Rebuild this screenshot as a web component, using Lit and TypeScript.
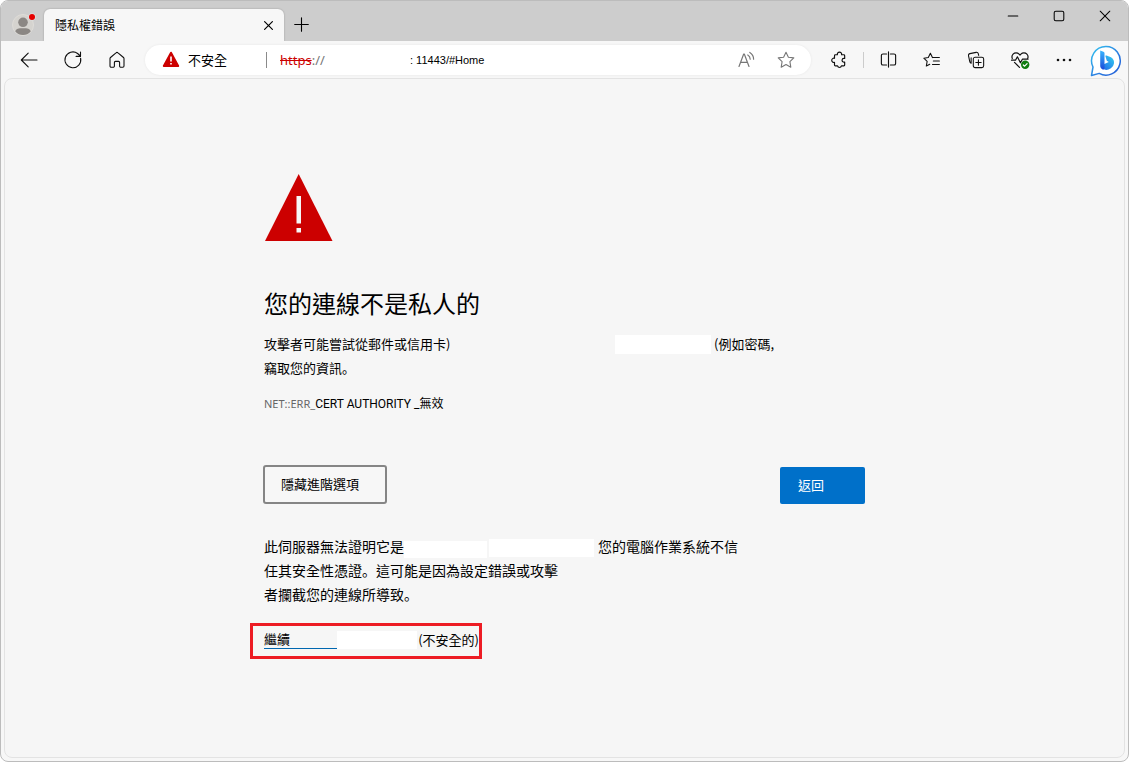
import { LitElement, html, css, svg } from "lit";
import { customElement, state } from "lit/decorators.js";

const icon = (size: number, body: unknown, width = 1.1) => html`
  <svg width=${size} height=${size} viewBox="0 0 20 20" fill="none" stroke="currentColor"
    stroke-width=${width} stroke-linecap="round" stroke-linejoin="round" aria-hidden="true">${body}</svg>`;

const STAR = "M10 2.2 12.4 7.2 17.8 7.9 13.9 11.7 14.8 17.2 10 14.6 5.2 17.2 6.1 11.7 2.2 7.9 7.6 7.2Z";

const icons = {
  back: svg`<path d="M18 10H2.3M9.2 3.2 2.3 10l6.9 6.8"/>`,
  reload: svg`<path d="M17.6 8.2A7.9 7.9 0 1 1 14.6 3.5L17.3 6M17.5 2v4.4h-4.4"/>`,
  home: svg`<path d="M3 8.6a1.5 1.5 0 0 1 .5-1.1L9 2.8a1.5 1.5 0 0 1 2 0l5.5 4.7a1.5 1.5 0 0 1 .5 1.1V16a1.2 1.2 0 0 1-1.2 1.2h-2A1.2 1.2 0 0 1 12.6 16v-3.6a1 1 0 0 0-1-1H8.4a1 1 0 0 0-1 1V16a1.2 1.2 0 0 1-1.2 1.2h-2A1.2 1.2 0 0 1 3 16Z"/>`,
  readAloud: svg`<path d="M3 16.500 7.700 4h.6L13 16.500M4.700 12.300h6.600M11.800 5a5 5 0 0 1 2.400 4.200M13.800 2.400a8 8 0 0 1 3.800 6.800"/>`,
  star: svg`<path d=${STAR}/>`,
  puzzle: svg`<path d="M5 5.200a1 1 0 0 1 1-1h2.200a2.400 2.400 0 1 1 4.700 0h2.400a1 1 0 0 1 1 1v3h-.8a2 2 0 1 0 0 4.200h.8v3.200a1 1 0 0 1-1 1h-2.600a2.200 2.200 0 0 1-4.300 0H6a1 1 0 0 1-1-1v-2.900a2.400 2.400 0 1 1 0-4.600Z"/>`,
  split: svg`<path d="M10 2v16M8 4.200H4.200A1.700 1.700 0 0 0 2.500 5.900v8.200a1.700 1.700 0 0 0 1.700 1.700H8M12 4.200h3.800a1.700 1.700 0 0 1 1.700 1.700v8.200a1.700 1.700 0 0 1-1.700 1.700H12"/>`,
  favorites: svg`<path d="M10.500 7.300 8.200 2.500 5.900 7.300.9 8l3.700 3.500-.9 5.200 3.800-2M10.500 7.300h7.700M11.500 11.200h6.700M10.500 15h7.700"/>`,
  collections: svg`<rect x="7" y="7" width="11.500" height="11.500" rx="2"/><path d="M12.700 9.800v5.900M9.800 12.700h5.900M4.600 13.600a2.400 2.400 0 0 1-1.500-1.800L1.700 5.300a2 2 0 0 1 1.500-2.400l7-1.400a2 2 0 0 1 2.300 1.500l.5 1.900M4.600 13.600V7.500"/>`,
  health: svg`<path d="M2.300 8.500a4.200 4.200 0 0 1 .8-4.400 4.200 4.200 0 0 1 6 0l.9.900.9-.9a4.200 4.200 0 0 1 6 0 4.200 4.200 0 0 1 .8 4.400M1.500 10.200h4l1.900-3.400 3 6 2-3.600h5.600M4.500 12.400l5 5"/><circle cx="15.200" cy="14.800" r="4.200" fill="#107c10" stroke="none"/><path d="m13.300 15 1.300 1.200 2.500-2.600" stroke="#fff"/>`,
  more: svg`<g fill="currentColor" stroke="none"><circle cx="4" cy="10" r="1.300"/><circle cx="10" cy="10" r="1.300"/><circle cx="16" cy="10" r="1.300"/></g>`,
  close: svg`<path d="m4 4 12 12M16 4 4 16"/>`,
  plus: svg`<path d="M10 2v16M2 10h16"/>`,
  minimize: svg`<path d="M4 10h12"/>`,
  maximize: svg`<rect x="4" y="4" width="12" height="12" rx="2"/>`,
};

@customElement("browser-titlebar")
class BrowserTitlebar extends LitElement {
  static styles = css`
    :host { display: flex; height: 40px; background: #cdcdcd; color: #000; }
    button { border: 0; padding: 0; background: none; color: inherit; display: grid; place-items: center; font: inherit; }
    .profile { width: 43px; height: 40px; padding-top: 8px; padding-left: 3px; }
    .tab { display: flex; align-items: center; width: 240px; box-sizing: border-box; margin-top: 8px; padding: 0 6px 0 11px;
      background: #f7f7f7; border-radius: 6px 6px 0 0; box-shadow: 0 0 2px #0004; clip-path: inset(-3px -3px 0 -3px); }
    .title { flex: 1; font-size: 12px; line-height: 16px; }
    .small { width: 20px; height: 20px; }
    .new { width: 34px; height: 32px; margin-top: 7px; }
    .spacer { flex: 1; }
    .control { width: 46px; height: 30px; }
  `;
  render() {
    return html`
      <button class="profile" aria-label="個人檔案">
        <svg width="24" height="24" viewBox="0 0 24 24" aria-hidden="true">
          <circle cx="11" cy="12" r="10.500" fill="#d5d3cf" stroke="#dedcd8"/>
          <circle cx="11" cy="9.300" r="4.800" fill="#8b8784"/>
          <path d="M3.300 18.400C4 15.700 6.500 15.200 11 15.200s7 .5 7.700 3.200A10.500 10.500 0 0 1 11 22a10.500 10.500 0 0 1-7.700-3.600Z" fill="#8b8784"/>
          <circle cx="20" cy="4" r="3.800" fill="#ddd"/><circle cx="20" cy="4" r="3" fill="#e60000"/>
        </svg>
      </button>
      <div class="tab">
        <span class="title">隱私權錯誤</span>
        <button class="small" aria-label="關閉索引標籤">${icon(13, icons.close, 1.8)}</button>
      </div>
      <button class="new" aria-label="新索引標籤">${icon(17, icons.plus, 1.3)}</button>
      <span class="spacer"></span>
      <button class="control" aria-label="最小化">${icon(16, icons.minimize, 1.3)}</button>
      <button class="control" aria-label="最大化">${icon(16, icons.maximize, 1.3)}</button>
      <button class="control" aria-label="關閉">${icon(16, icons.close, 1.3)}</button>
    `;
  }
}

@customElement("browser-toolbar")
class BrowserToolbar extends LitElement {
  static styles = css`
    :host { display: flex; align-items: center; height: 37px; padding: 0 6px; color: #111; }
    button { border: 0; padding: 0; background: none; color: inherit; display: grid; place-items: center; width: 44px; height: 30px; }
    .address { flex: 1; min-width: 0; display: flex; align-items: center; height: 30px; margin: 0 6px; padding: 0 5px 0 17px;
      box-sizing: border-box; background: #fff; border-radius: 15px; box-shadow: 0 0 3px #0001; }
    .warning { margin-right: 8px; }
    .state { flex: none; width: 78px; font-size: 13px; line-height: 20px; color: #000; }
    .divider { flex: none; width: 1px; height: 16px; background: #8a8a8a; margin-right: 13px; }
    .scheme { flex: none; width: 130px; font: 13px/20px "Noto Sans", "Open Sans", sans-serif; color: #777; }
    .scheme s { color: #c00; }
    .url { flex: 1; min-width: 0; border: 0; padding: 0; background: none; outline: none; color: #000;
      font: 11px/20px "Liberation Sans", Roboto, sans-serif; }
    .inner { width: 40px; color: #777; }
    .rule { width: 1px; height: 16px; background: #ccc; margin: 0 2px; }
    .bing { width: 32px; margin-left: 4px; }
  `;
  render() {
    return html`
      <button aria-label="上一頁">${icon(20, icons.back)}</button>
      <button aria-label="重新整理">${icon(20, icons.reload)}</button>
      <button aria-label="首頁">${icon(20, icons.home)}</button>
      <div class="address">
        <svg class="warning" width="18" height="17" viewBox="0 0 18 17" aria-hidden="true">
          <path d="M9 1.700 16.200 15H1.800Z" fill="#c00" stroke="#c00" stroke-width="2" stroke-linejoin="round"/>
          <path d="M9 5.500v5M9 12v1.600" stroke="#fff" stroke-width="1.600"/>
        </svg>
        <span class="state">不安全</span>
        <span class="divider"></span>
        <span class="scheme"><s>https</s>://</span>
        <input class="url" aria-label="網址" .value=${": 11443/#Home"} />
        <button class="inner" aria-label="大聲朗讀">${icon(20, icons.readAloud, 1.2)}</button>
        <button class="inner" aria-label="加入我的最愛">${icon(20, icons.star)}</button>
      </div>
      <button aria-label="擴充功能">${icon(18, icons.puzzle, 1.3)}</button>
      <span class="rule"></span>
      <button aria-label="分割視窗">${icon(19, icons.split, 1.2)}</button>
      <button aria-label="我的最愛">${icon(18, icons.favorites, 1.2)}</button>
      <button aria-label="集錦">${icon(18, icons.collections, 1.2)}</button>
      <button aria-label="瀏覽器基本資訊">${icon(20, icons.health, 1.2)}</button>
      <button aria-label="設定及其他">${icon(20, icons.more)}</button>
      <button class="bing" aria-label="Bing">
        <svg width="32" height="32" viewBox="0 0 32 32" aria-hidden="true">
          <defs>
            <linearGradient id="ring" x1="0" y1="0" x2="1" y2="1"><stop stop-color="#35c4f0"/><stop offset=".6" stop-color="#2a7be0"/><stop offset="1" stop-color="#2159d6"/></linearGradient>
            <linearGradient id="stem" x1="0" y1="0" x2="0" y2="1"><stop stop-color="#38b6ff"/><stop offset="1" stop-color="#1b48d8"/></linearGradient>
            <linearGradient id="bowl" x1="1" y1="0" x2="0" y2="1"><stop stop-color="#35d0f0"/><stop offset="1" stop-color="#1f62e8"/></linearGradient>
          </defs>
          <path d="M16 1.500a14.300 14.300 0 1 1-6.800 26.900L1.500 30.500 3 22A14.300 14.300 0 0 1 16 1.500Z" fill="#fff" stroke="url(#ring)" stroke-width="1.500" stroke-linejoin="round"/>
          <path d="M15.500 11.500c-.4-.8.200-1.300 1-1l4.500 1.800a5.800 5.800 0 0 1 2.400 7.900c-1.500 2.900-5.400 5.700-8.900 4.400-2-.8-3.500-2-3.500-4l7.800-3.700-2-1.100Z" fill="url(#bowl)"/>
          <path d="M10.200 5.500l3.200 1.200a1.500 1.500 0 0 1 1.100 1.400V23l-1 1.700c-2-.6-3.300-1.800-3.300-3.700Z" fill="url(#stem)"/>
        </svg>
      </button>
    `;
  }
}

@customElement("privacy-error")
class PrivacyError extends LitElement {
  @state() private advanced = true;

  static styles = css`
    :host { display: block; max-width: 601px; margin: 0 auto; padding: 95px 16px 32px; color: #000; font-size: 13px; line-height: 24px; }
    .alert { display: block; margin-left: 1px; }
    h1 { margin: 46px 0 0; font-size: 24px; line-height: 32px; font-weight: 400; }
    p { margin: 0; }
    .summary { margin-top: 13px; }
    .row { display: flex; align-items: center; white-space: nowrap; }
    .stop { font-family: "Noto Sans CJK JP", sans-serif; }
    .first { width: 351px; }
    .mask { flex: none; height: 18px; background: #fff; }
    .wide { width: 96px; height: 19px; margin-right: 3px; }
    .code { margin-top: 11px; font-size: 12px; white-space: nowrap; }
    .prefix { font-family: "Noto Sans", "Open Sans", sans-serif; color: #666; font-size: 11px; }
    .name { font-family: Roboto, "Liberation Sans", sans-serif; }
    .actions { display: flex; justify-content: space-between; align-items: flex-end; margin: 49px 0 30px -1px; }
    button { box-sizing: border-box; font: inherit; text-align: left; border-radius: 2px; }
    .toggle { width: 124px; height: 39px; padding: 0 16px 2px; border: 2px solid #858585; border-radius: 3px; background: #f7f7f7; color: #000; }
    .primary { width: 85px; height: 37px; padding: 0 18px 2px; border: 0; background: #0070c9; color: #fff; }
    .details { font-size: 14px; }
    .host { width: 83px; height: 17px; margin-top: 6px; }
    .domain { width: 105px; margin: 4px 4px 0 2px; }
    .proceed { display: flex; align-items: center; box-sizing: border-box; width: 232px; height: 36px; margin: 17px 0 0 -14px; padding: 0 0 2px 11px; border: 3px solid #ed1c24; white-space: nowrap; }
    .link { display: flex; width: 155px; height: 18px; line-height: 16px; margin-right: 1px; box-sizing: border-box; border-bottom: 1px solid #0067b0; color: #000; text-decoration: none; }
    .label { width: 73px; }
    .site { width: 80px; height: 18px; }
  `;
  render() {
    return html`
      <svg class="alert" width="68" height="67" viewBox="0 0 68 67" aria-hidden="true">
        <path d="M33.700 0 67.500 67H0Z" fill="#c00"/><path d="M31.500 22h4.500v27.500h-4.500ZM31.500 54h4.500v4.500h-4.500Z" fill="#f6f6f6"/>
      </svg>
      <h1>您的連線不是私人的</h1>
      <p class="summary row"><span class="first">攻擊者可能嘗試從郵件或信用卡)</span><span class="mask wide"></span><span>(例如密碼,</span></p>
      <p>竊取您的資訊<span class="stop">。</span></p>
      <p class="code"><span class="prefix">NET::ERR_</span><span class="name">CERT AUTHORITY _</span>無效</p>
      <div class="actions">
        <button class="toggle" aria-expanded=${this.advanced} @click=${() => (this.advanced = !this.advanced)}>隱藏進階選項</button>
        <button class="primary">返回</button>
      </div>
      ${this.advanced
        ? html`<div class="details">
              <p class="row"><span>此伺服器無法證明它是</span><span class="mask host"></span><span class="mask domain"></span><span>您的電腦作業系統不信</span></p>
              <p>任其安全性憑證<span class="stop">。</span>這可能是因為設定錯誤或攻擊</p>
              <p>者攔截您的連線所導致<span class="stop">。</span></p>
            </div>
            <p class="proceed"><a class="link" href="#proceed"><span class="label">繼續</span><span class="mask site"></span></a><span>(不安全的)</span></p>`
        : null}
    `;
  }
}

@customElement("app-root")
class AppRoot extends LitElement {
  static styles = css`
    :host { display: flex; flex-direction: column; box-sizing: border-box; min-height: 100vh; border: 1px solid #bcbcbc; border-radius: 8px; overflow: hidden; background: #f7f7f7;
      font-family: "Noto Sans CJK TC", "Noto Sans", sans-serif; }
    .page { flex: 1; margin: 0 3px 3px; border: 1px solid #e3e3e3; border-radius: 8px; background: #f6f6f6; }
  `;
  render() {
    return html`
      <browser-titlebar></browser-titlebar>
      <browser-toolbar></browser-toolbar>
      <main class="page"><privacy-error></privacy-error></main>
    `;
  }
}
